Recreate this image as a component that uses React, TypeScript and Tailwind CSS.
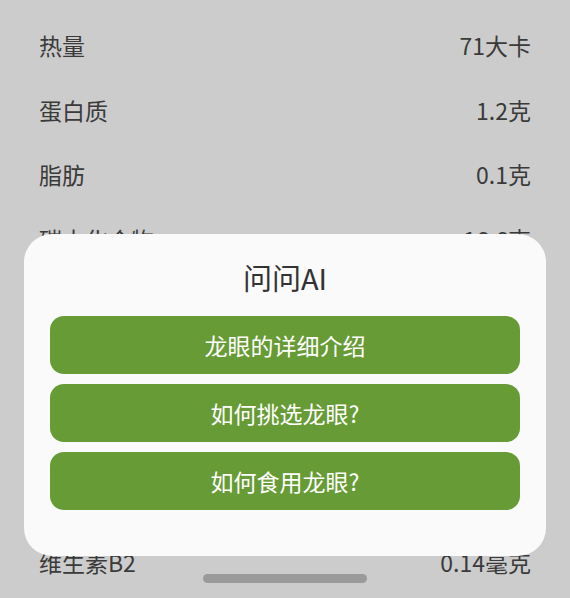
const ROWS = [
  { name: "热量", value: "71大卡" },
  { name: "蛋白质", value: "1.2克" },
  { name: "脂肪", value: "0.1克" },
  { name: "碳水化合物", value: "16.6克" },
  { name: "膳食纤维", value: "0.4克" },
  { name: "维生素A", value: "3微克" },
  { name: "维生素C", value: "43毫克" },
  { name: "维生素B1", value: "0.01毫克" },
  { name: "维生素B2", value: "0.14毫克" },
];

const QUESTIONS = ["龙眼的详细介绍", "如何挑选龙眼?", "如何食用龙眼?"];

export default function App() {
  return (
    <div
      className="relative w-[570px] h-[598px] overflow-hidden bg-[#cccccc]"
      style={{ fontFamily: '"Noto Sans CJK SC", "Noto Sans", sans-serif' }}
    >
      {/* nutrition list, dimmed behind the sheet */}
      <div className="flex flex-col px-[39px] pt-[13px]">
        {ROWS.map((row, i) => (
          <div
            key={row.name}
            className={`flex items-center justify-between h-[64.6px] text-[23px] text-[#3a3a3a] ${
              i >= 4 && i < 8 ? "invisible" : ""
            }`}
          >
            <span>{row.name}</span>
            <span>{row.value}</span>
          </div>
        ))}
      </div>

      {/* ask AI sheet */}
      <div className="absolute left-[24px] top-[234px] w-[522px] h-[322px] rounded-[28px] bg-[#fafafa] px-[26px] pt-[23px]">
        <div className="text-center text-[29px] leading-[40px] text-[#333333] mb-[19px]">问问AI</div>
        <div className="flex flex-col gap-[10px]">
          {QUESTIONS.map((q) => (
            <button
              key={q}
              className="h-[58px] w-full rounded-[14px] bg-[#679b36] text-white text-[23px]"
            >
              {q}
            </button>
          ))}
        </div>
      </div>

      {/* home indicator */}
      <div className="absolute left-[203px] top-[574px] w-[164px] h-[9px] rounded-full bg-[#9a9a9a]" />
    </div>
  );
}
